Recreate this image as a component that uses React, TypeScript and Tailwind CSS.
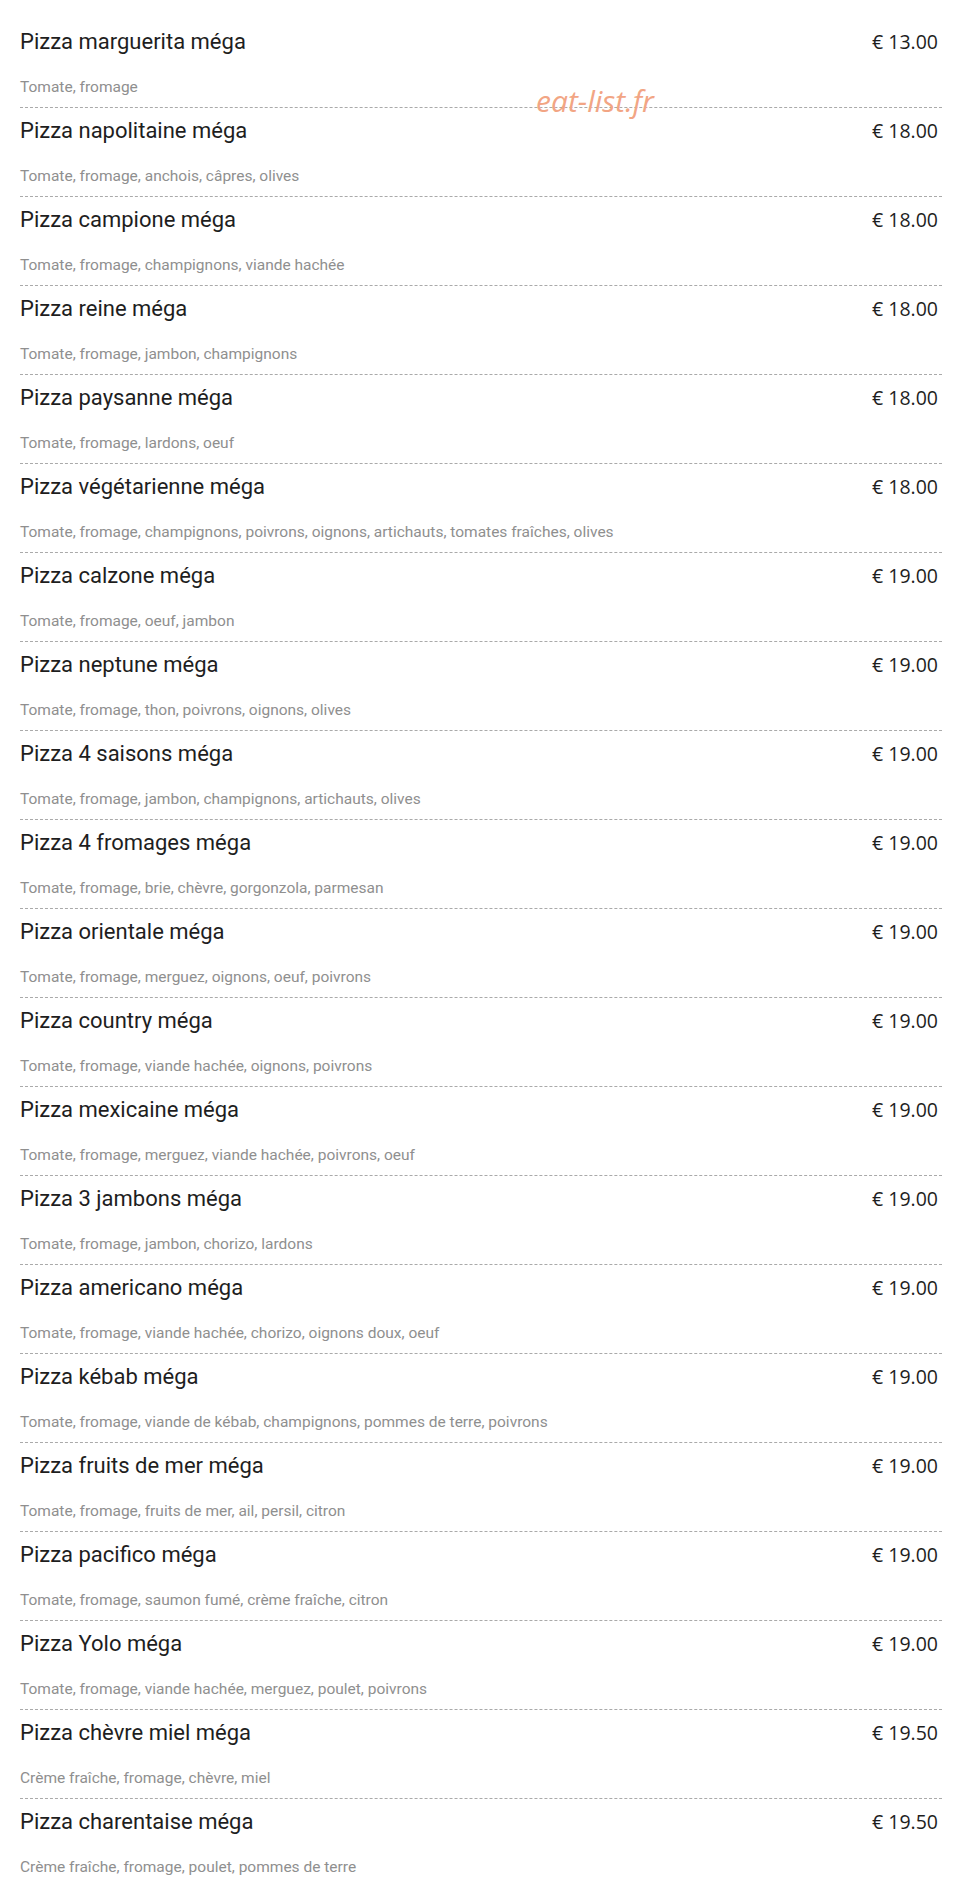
import React from "react";

const items: [string, string, string][] = [
  ["Pizza marguerita méga", "Tomate, fromage", "€ 13.00"],
  ["Pizza napolitaine méga", "Tomate, fromage, anchois, câpres, olives", "€ 18.00"],
  ["Pizza campione méga", "Tomate, fromage, champignons, viande hachée", "€ 18.00"],
  ["Pizza reine méga", "Tomate, fromage, jambon, champignons", "€ 18.00"],
  ["Pizza paysanne méga", "Tomate, fromage, lardons, oeuf", "€ 18.00"],
  ["Pizza végétarienne méga", "Tomate, fromage, champignons, poivrons, oignons, artichauts, tomates fraîches, olives", "€ 18.00"],
  ["Pizza calzone méga", "Tomate, fromage, oeuf, jambon", "€ 19.00"],
  ["Pizza neptune méga", "Tomate, fromage, thon, poivrons, oignons, olives", "€ 19.00"],
  ["Pizza 4 saisons méga", "Tomate, fromage, jambon, champignons, artichauts, olives", "€ 19.00"],
  ["Pizza 4 fromages méga", "Tomate, fromage, brie, chèvre, gorgonzola, parmesan", "€ 19.00"],
  ["Pizza orientale méga", "Tomate, fromage, merguez, oignons, oeuf, poivrons", "€ 19.00"],
  ["Pizza country méga", "Tomate, fromage, viande hachée, oignons, poivrons", "€ 19.00"],
  ["Pizza mexicaine méga", "Tomate, fromage, merguez, viande hachée, poivrons, oeuf", "€ 19.00"],
  ["Pizza 3 jambons méga", "Tomate, fromage, jambon, chorizo, lardons", "€ 19.00"],
  ["Pizza americano méga", "Tomate, fromage, viande hachée, chorizo, oignons doux, oeuf", "€ 19.00"],
  ["Pizza kébab méga", "Tomate, fromage, viande de kébab, champignons, pommes de terre, poivrons", "€ 19.00"],
  ["Pizza fruits de mer méga", "Tomate, fromage, fruits de mer, ail, persil, citron", "€ 19.00"],
  ["Pizza pacifico méga", "Tomate, fromage, saumon fumé, crème fraîche, citron", "€ 19.00"],
  ["Pizza Yolo méga", "Tomate, fromage, viande hachée, merguez, poulet, poivrons", "€ 19.00"],
  ["Pizza chèvre miel méga", "Crème fraîche, fromage, chèvre, miel", "€ 19.50"],
  ["Pizza charentaise méga", "Crème fraîche, fromage, poulet, pommes de terre", "€ 19.50"],
];

export default function App() {
  return (
    <div className="relative min-h-[1883px] bg-white pl-[20px] pr-[12px] pt-[19px]" style={{ fontFamily: "Roboto, 'Noto Sans', sans-serif" }}>
      <div className="absolute left-[536px] top-[82px] text-[30px] italic leading-[38px] text-[#f2a584]" style={{ fontFamily: "'Open Sans', sans-serif" }}>
        eat-list.fr
      </div>
      {items.map(([name, desc, price], i) => (
        <div key={i} className="flex h-[89px] flex-col border-b border-dashed border-[#aaaaaa] pt-[9px]">
          <div className="flex items-start justify-between">
            <span className="text-[22px] leading-[28px] text-[#1e1e1e]">{name}</span>
            <span className="pr-[4px] text-[19.5px] leading-[28px] text-[#1e1e1e]" style={{ fontFamily: "'Open Sans', sans-serif" }}>{price}</span>
          </div>
          <div className="mt-[21px] text-[15.5px] leading-[20px] text-[#8f8f8f]">{desc}</div>
        </div>
      ))}
    </div>
  );
}
